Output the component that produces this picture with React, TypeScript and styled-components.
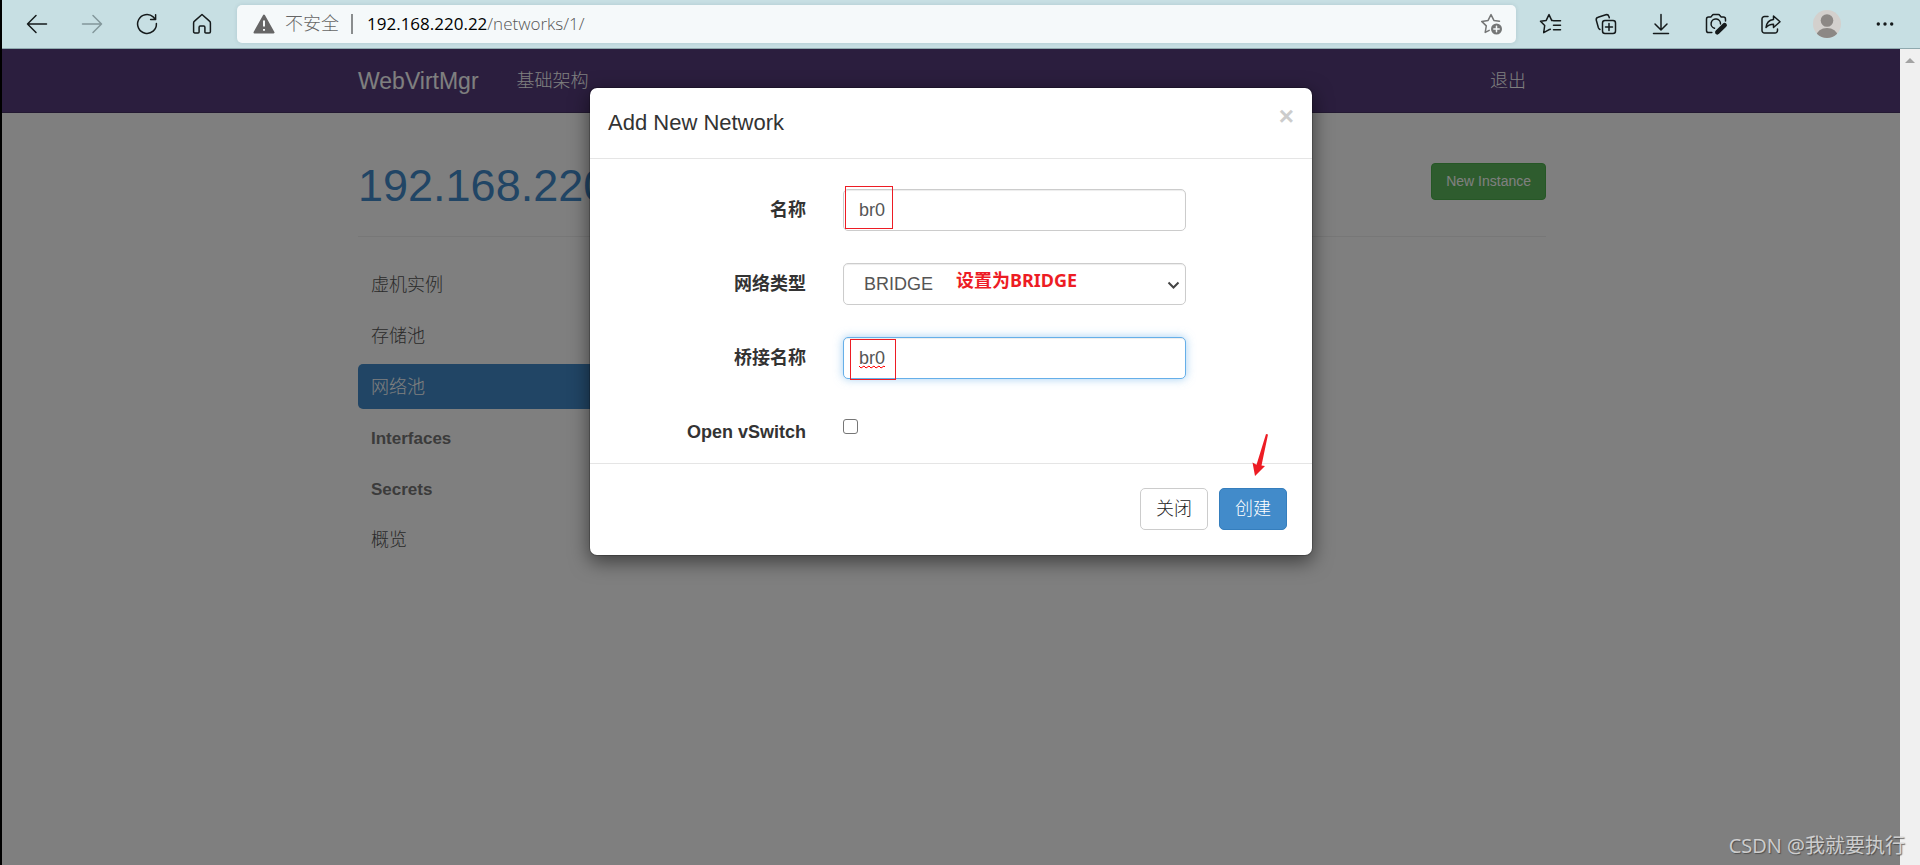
import React from "react";
import styled, { createGlobalStyle, css } from "styled-components";

const GlobalStyle = createGlobalStyle`
  *, *::before, *::after { box-sizing: border-box; }
  body {
    margin: 0;
    font-family: "Liberation Sans", "Noto Sans CJK SC", sans-serif;
    font-size: 18px;
    line-height: 26px;
    color: #333;
    background: #fff;
  }
  h1, h2, ul { margin: 0; padding: 0; }
  button, input, select { font: inherit; }
  a { color: inherit; text-decoration: none; }
`;

const Window = styled.div`
  position: relative;
  display: flex;
  flex-direction: column;
  min-height: 100vh;
  border-left: 2px solid #000;
`;

/* ---------- browser toolbar ---------- */

const Toolbar = styled.header`
  display: flex;
  align-items: center;
  height: 49px;
  padding: 0 6px 0 7px;
  background: #c7dfe3;
  border-bottom: 1px solid #8fa9ae;
`;

const ToolGroup = styled.div`
  display: flex;
  align-items: center;
`;

const ToolButton = styled.button<{ $wide?: boolean; $dim?: boolean }>`
  display: flex;
  align-items: center;
  justify-content: center;
  width: ${(p) => (p.$wide ? 58 : 55)}px;
  height: 38px;
  padding: 0;
  border: 0;
  background: none;
  color: ${(p) => (p.$dim ? "#83979b" : "#151a1b")};
`;

const AddressBar = styled.div`
  display: flex;
  flex: 1;
  align-items: center;
  height: 38px;
  margin: 0 7px 0 8px;
  padding: 0 13px 0 16px;
  border-radius: 5px;
  background: #f5f9fa;
  box-shadow: 0 0 4px rgba(0, 60, 70, 0.12);
`;

const Security = styled.span`
  margin: 0 12px 0 10px;
  padding-right: 12px;
  border-right: 2px solid #8a8d8e;
  line-height: 20px;
  font-weight: 300;
  color: #666;
`;

const Address = styled.div`
  flex: 1;
  padding-left: 2px;
  font-family: "Open Sans", "Noto Sans CJK SC", sans-serif;
  font-size: 17px;
  font-weight: 300;
  color: #555;
`;

const Host = styled.span`
  color: #000;
  font-weight: 400;
`;

const StarButton = styled.button`
  display: flex;
  padding: 0;
  border: 0;
  background: none;
  color: #757777;
`;

/* ---------- page behind the dialog ---------- */

const Viewport = styled.div`
  display: flex;
  flex: 1;
`;

const Page = styled.div`
  position: relative;
  flex: 1;
  min-width: 0;
`;

const Scrollbar = styled.div`
  display: flex;
  justify-content: center;
  align-items: flex-start;
  width: 20px;
  padding-top: 9px;
  background: #f0f0f0;
`;

const Container = styled.div`
  max-width: 1190px;
  margin: 0 auto;
  padding-left: 2px;
`;

const Navbar = styled.nav`
  background: #563d7c;
  border-bottom: 1px solid #463265;
  color: #fff;
`;

const NavRow = styled(Container)`
  display: flex;
  align-items: center;
  height: 63px;
`;

const Brand = styled.a`
  margin-right: 38px;
  font-size: 23px;
`;

const NavLink = styled.a<{ $end?: boolean }>`
  font-weight: 300;
  ${(p) =>
    p.$end &&
    css`
      margin-left: auto;
      margin-right: 20px;
    `}
`;

const PageHeader = styled.div`
  display: flex;
  justify-content: space-between;
  align-items: flex-start;
  margin-top: 48px;
  padding-bottom: 25px;
  border-bottom: 1px solid #eee;
`;

const HostTitle = styled.h1`
  font-size: 45px;
  line-height: 50px;
  font-weight: 400;
  color: #428bca;
`;

const NewInstance = styled.button`
  height: 37px;
  margin-top: 2px;
  padding: 0 14px 2px;
  border: 1px solid #4cae4c;
  border-radius: 4px;
  background: #5cb85c;
  color: #fff;
  font-size: 14px;
`;

const SideNav = styled.ul`
  display: flex;
  flex-direction: column;
  gap: 6px;
  width: 270px;
  margin-top: 25px;
  list-style: none;
`;

const SideLink = styled.a<{ $active?: boolean; $strong?: boolean }>`
  display: block;
  padding: 2px 13px 0;
  border-radius: 5px;
  line-height: 43px;
  font-size: ${(p) => (p.$strong ? 17 : 18)}px;
  font-weight: ${(p) => (p.$strong ? 700 : 300)};
  color: ${(p) => (p.$active ? "#fff" : p.$strong ? "#777" : "#555")};
  background: ${(p) => (p.$active ? "#428bca" : "transparent")};
`;

/* ---------- dialog ---------- */

const Backdrop = styled.div`
  position: absolute;
  inset: 0;
  display: flex;
  justify-content: center;
  align-items: flex-start;
  padding-top: 38px;
  background: rgba(0, 0, 0, 0.5);
`;

const Dialog = styled.form`
  width: 724px;
  border: 1px solid rgba(0, 0, 0, 0.2);
  border-radius: 8px;
  background: #fff;
  background-clip: padding-box;
  box-shadow: 0 6px 19px rgba(0, 0, 0, 0.5);
`;

const DialogHeader = styled.div`
  display: flex;
  justify-content: space-between;
  align-items: flex-start;
  padding: 18px;
  border-bottom: 1px solid #e5e5e5;
`;

const DialogTitle = styled.h2`
  font-size: 22px;
  line-height: 34px;
  font-weight: 400;
`;

const CloseButton = styled.button`
  padding: 0;
  border: 0;
  background: none;
  font-size: 26px;
  line-height: 20px;
  font-weight: 700;
  color: #ccc;
`;

const Fields = styled.div`
  display: flex;
  flex-direction: column;
  gap: 32px;
  padding: 30px 0 10px;
`;

const Field = styled.div`
  display: grid;
  grid-template-columns: 216px 343px;
  column-gap: 37px;
  min-height: 42px;
`;

const Label = styled.label`
  align-self: center;
  text-align: right;
  font-weight: 700;
`;

const Control = styled.div`
  position: relative;
`;

const controlStyle = css`
  display: block;
  width: 100%;
  height: 42px;
  padding: 0 15px;
  border: 1px solid #ccc;
  border-radius: 5px;
  outline: 0;
  background: #fff;
  color: #555;
  box-shadow: inset 0 1px 1px rgba(0, 0, 0, 0.075);
`;

const TextInput = styled.input<{ $focused?: boolean }>`
  ${controlStyle}
  ${(p) =>
    p.$focused &&
    css`
      border-color: #66afe9;
      box-shadow: inset 0 1px 1px rgba(0, 0, 0, 0.075), 0 0 10px rgba(102, 175, 233, 0.6);
    `}
`;

const Select = styled.select`
  ${controlStyle}
  padding-left: 20px;
  appearance: none;
`;

const Chevron = styled.svg`
  position: absolute;
  top: 18px;
  right: 6px;
  pointer-events: none;
`;

const CheckBox = styled.input`
  display: block;
  width: 15px;
  height: 15px;
  margin: 8px 0 0;
  appearance: none;
  border: 1px solid #767676;
  border-radius: 3px;
  background: #fff;
`;

const DialogFooter = styled.div`
  position: relative;
  display: flex;
  justify-content: flex-end;
  gap: 11px;
  padding: 24px 25px 25px;
  border-top: 1px solid #e5e5e5;
`;

const DialogButton = styled.button<{ $primary?: boolean }>`
  height: 42px;
  padding: 0 15px;
  border: 1px solid ${(p) => (p.$primary ? "#357ebd" : "#ccc")};
  border-radius: 5px;
  background: ${(p) => (p.$primary ? "#428bca" : "#fff")};
  color: ${(p) => (p.$primary ? "#fff" : "#222")};
  font-weight: 300;
`;

/* ---------- annotations drawn over the dialog ---------- */

const RedBox = styled.span<{ $x: number; $y: number; $w: number; $h: number }>`
  position: absolute;
  left: ${(p) => p.$x}px;
  top: ${(p) => p.$y}px;
  width: ${(p) => p.$w}px;
  height: ${(p) => p.$h}px;
  border: 1px solid #ed1c24;
  pointer-events: none;
`;

const RedNote = styled.span`
  position: absolute;
  top: 4px;
  left: 113px;
  font-family: "Noto Sans", "Noto Sans CJK SC", sans-serif;
  font-weight: 700;
  white-space: nowrap;
  color: #ed1c24;
  pointer-events: none;
`;

const Squiggle = styled.svg`
  position: absolute;
  left: 16px;
  top: 28px;
`;

const RedArrow = styled.svg`
  position: absolute;
  top: -31px;
  right: 43px;
`;

const Watermark = styled.div`
  position: absolute;
  right: 15px;
  bottom: 6px;
  font-family: "Open Sans", "Noto Sans CJK SC", sans-serif;
  font-size: 20px;
  color: rgba(225, 225, 225, 0.85);
  text-shadow: 1px 1px 1px rgba(60, 60, 60, 0.7);
`;

/* ---------- icons ---------- */

const Icon = ({ children }: { children: React.ReactNode }) => (
  <svg
    width="24"
    height="24"
    viewBox="0 0 24 24"
    fill="none"
    stroke="currentColor"
    strokeWidth="1.5"
    strokeLinecap="round"
    strokeLinejoin="round"
    aria-hidden="true"
  >
    {children}
  </svg>
);

const BackIcon = () => (
  <Icon>
    <path d="M21.500 12H2.500M11 3.500L2.500 12l8.500 8.500" />
  </Icon>
);

const ForwardIcon = () => (
  <Icon>
    <path d="M2.500 12h19M13 3.500l8.500 8.500-8.500 8.500" />
  </Icon>
);

const ReloadIcon = () => (
  <Icon>
    <path d="M21.400 11.500a9.400 9.400 0 1 1-3.200-6.600l2.300 2.500M20.600 2.700v4.900h-5" />
  </Icon>
);

const HomeIcon = () => (
  <Icon>
    <path d="M12 2.500l7.500 6.600c.6.500.9 1 .9 1.800v8.800c0 .7-.5 1.200-1.200 1.200h-3.300c-.6 0-1-.4-1-1v-4.600c0-.8-.5-1.300-1.200-1.300h-3.400c-.7 0-1.200.5-1.200 1.300v4.600c0 .6-.4 1-1 1H4.800c-.7 0-1.200-.5-1.200-1.200v-8.800c0-.8.300-1.300.9-1.800z" />
  </Icon>
);

const WarningIcon = () => (
  <svg width="22" height="20" viewBox="0 0 22 20" aria-hidden="true">
    <path d="M11 1.500L20.500 18.500H1.500z" fill="#666" stroke="#666" strokeWidth="2" strokeLinejoin="round" />
    <path d="M11 6.500v6M11 15v1.800" stroke="#f5f9fa" strokeWidth="2" />
  </svg>
);

const StarAddIcon = () => (
  <Icon>
    <path d="M20.500 9.200l-5.600-.8L12 2.600 9.100 8.400l-6.400 1 4.600 4.500-1.100 6.500 4-2.100" />
    <circle cx="17.500" cy="17" r="5.500" fill="currentColor" stroke="none" />
    <path d="M17.500 14.300v5.400M14.800 17h5.400" stroke="#f5f9fa" />
  </Icon>
);

const FavoritesIcon = () => (
  <Icon>
    <path d="M13.800 8.600h-1L10 2.600 7.200 8.400l-5.700.9 4.200 4.200-1 7.200 5-2.900 1.700-.6M14.500 8.800h7M14.500 13.300h7M14.500 17.800h7" />
  </Icon>
);

const CollectionsIcon = () => (
  <Icon>
    <rect x="8.500" y="8.500" width="13" height="13" rx="2.500" />
    <path d="M15 11.500v7M11.500 15h7M6 17.500a3 3 0 0 1-1.600-1.800L2.300 8.300a2.500 2.500 0 0 1 1.800-3l7.700-2.500a2.500 2.500 0 0 1 3.100 1.600l.4 1.400" />
  </Icon>
);

const DownloadIcon = () => (
  <Icon>
    <path d="M12 2.500v15M6 12l6 6 6-6M4.500 21.500h15" />
  </Icon>
);

const CameraIcon = () => (
  <Icon>
    <path d="M7.800 20.500H4.600c-1.300 0-2.100-.8-2.100-2.100V7.200c0-1.300.8-2.100 2.100-2.100h2.200l1.500-1.900c.3-.4.700-.6 1.200-.6h5c.5 0 .9.200 1.200.6l1.500 1.900h2.200c1.300 0 2.100.8 2.100 2.100v1.800M10.500 16.200a4.700 4.700 0 1 1 6-4.300" />
    <path d="M20.600 13.200l-7.200 7" strokeWidth="4.600" />
    <path d="M11.500 22l.8-3.500 2.700 2.700z" fill="currentColor" stroke="none" />
  </Icon>
);

const ShareIcon = () => (
  <Icon>
    <path d="M9 4.600H5.500A2.500 2.500 0 0 0 3 7.100v11.400A2.500 2.500 0 0 0 5.500 21H16a2.500 2.500 0 0 0 2.500-2.500V17" />
    <path d="M14.500 4l6.500 5.800-6.500 5.700v-3.300c-3.500 0-5.700 1-7.500 3.300.5-4.500 3-7.600 7.500-8.100z" />
  </Icon>
);

const AvatarIcon = () => (
  <svg width="28" height="28" viewBox="0 0 28 28" aria-hidden="true">
    <clipPath id="avatar-clip">
      <circle cx="14" cy="14" r="14" />
    </clipPath>
    <g clipPath="url(#avatar-clip)">
      <rect width="28" height="28" fill="#d3d0cd" />
      <circle cx="14" cy="10.500" r="6.300" fill="#8c8885" />
      <ellipse cx="14" cy="26" rx="10.500" ry="8" fill="#8c8885" />
    </g>
  </svg>
);

const MoreIcon = () => (
  <Icon>
    <g fill="currentColor" stroke="none">
      <circle cx="5.300" cy="12" r="1.700" />
      <circle cx="12" cy="12" r="1.700" />
      <circle cx="18.700" cy="12" r="1.700" />
    </g>
  </Icon>
);

const sideItems = [
  { text: "虚机实例" },
  { text: "存储池" },
  { text: "网络池", active: true },
  { text: "Interfaces", strong: true },
  { text: "Secrets", strong: true },
  { text: "概览" },
];

export default function App() {
  return (
    <>
      <GlobalStyle />
      <Window>
        <Toolbar>
          <ToolGroup>
            <ToolButton aria-label="后退"><BackIcon /></ToolButton>
            <ToolButton aria-label="前进" $dim><ForwardIcon /></ToolButton>
            <ToolButton aria-label="刷新"><ReloadIcon /></ToolButton>
            <ToolButton aria-label="主页"><HomeIcon /></ToolButton>
          </ToolGroup>
          <AddressBar>
            <WarningIcon />
            <Security>不安全</Security>
            <Address>
              <Host>192.168.220.22</Host>/networks/1/
            </Address>
            <StarButton aria-label="收藏此页"><StarAddIcon /></StarButton>
          </AddressBar>
          <ToolGroup>
            <ToolButton aria-label="收藏夹"><FavoritesIcon /></ToolButton>
            <ToolButton aria-label="集锦"><CollectionsIcon /></ToolButton>
            <ToolButton aria-label="下载"><DownloadIcon /></ToolButton>
            <ToolButton aria-label="网页捕获"><CameraIcon /></ToolButton>
            <ToolButton aria-label="共享"><ShareIcon /></ToolButton>
            <ToolButton aria-label="个人资料" $wide><AvatarIcon /></ToolButton>
            <ToolButton aria-label="更多" $wide><MoreIcon /></ToolButton>
          </ToolGroup>
        </Toolbar>

        <Viewport>
          <Page>
            <Navbar>
              <NavRow>
                <Brand href="#">WebVirtMgr</Brand>
                <NavLink href="#">基础架构</NavLink>
                <NavLink href="#" $end>退出</NavLink>
              </NavRow>
            </Navbar>
            <Container>
              <PageHeader>
                <HostTitle>192.168.220.22</HostTitle>
                <NewInstance>New Instance</NewInstance>
              </PageHeader>
              <SideNav>
                {sideItems.map((item) => (
                  <li key={item.text}>
                    <SideLink href="#" $active={item.active} $strong={item.strong}>
                      {item.text}
                    </SideLink>
                  </li>
                ))}
              </SideNav>
            </Container>

            <Backdrop>
              <Dialog role="dialog" aria-labelledby="dialog-title" onSubmit={(e) => e.preventDefault()}>
                <DialogHeader>
                  <DialogTitle id="dialog-title">Add New Network</DialogTitle>
                  <CloseButton type="button" aria-label="关闭">×</CloseButton>
                </DialogHeader>
                <Fields>
                  <Field>
                    <Label htmlFor="name">名称</Label>
                    <Control>
                      <TextInput id="name" type="text" defaultValue="br0" />
                      <RedBox $x={2} $y={-3} $w={48} $h={43} />
                    </Control>
                  </Field>
                  <Field>
                    <Label htmlFor="type">网络类型</Label>
                    <Control>
                      <Select id="type" defaultValue="BRIDGE">
                        <option>BRIDGE</option>
                      </Select>
                      <Chevron width="13" height="9" viewBox="0 0 13 9" fill="none" stroke="#444" strokeWidth="2">
                        <path d="M1.500 1.500l5 5 5-5" />
                      </Chevron>
                      <RedNote>设置为BRIDGE</RedNote>
                    </Control>
                  </Field>
                  <Field>
                    <Label htmlFor="bridge">桥接名称</Label>
                    <Control>
                      <TextInput id="bridge" type="text" defaultValue="br0" spellCheck={false} $focused />
                      <Squiggle width="26" height="4" viewBox="0 0 26 4" fill="none" stroke="#f00">
                        <path d="M0 1l2 2 3-2 2 2 3-2 2 2 3-2 2 2 3-2 2 2 3-2 1 1" />
                      </Squiggle>
                      <RedBox $x={7} $y={2} $w={46} $h={41} />
                    </Control>
                  </Field>
                  <Field>
                    <Label htmlFor="vswitch">Open vSwitch</Label>
                    <Control>
                      <CheckBox id="vswitch" type="checkbox" />
                    </Control>
                  </Field>
                </Fields>
                <DialogFooter>
                  <DialogButton type="button">关闭</DialogButton>
                  <DialogButton type="submit" $primary>创建</DialogButton>
                  <RedArrow width="18" height="44" viewBox="0 0 18 44">
                    <path d="M15 1l2 .4-6.500 31.100 3.500.5L4 43 1.500 29.500l4 2.300z" fill="#ed1c24" />
                  </RedArrow>
                </DialogFooter>
              </Dialog>
            </Backdrop>
          </Page>
          <Scrollbar>
            <svg width="10" height="5" viewBox="0 0 10 5" aria-hidden="true">
              <path d="M0 5L5 0l5 5z" fill="#a3a3a3" />
            </svg>
          </Scrollbar>
        </Viewport>
        <Watermark>CSDN @我就要执行</Watermark>
      </Window>
    </>
  );
}
